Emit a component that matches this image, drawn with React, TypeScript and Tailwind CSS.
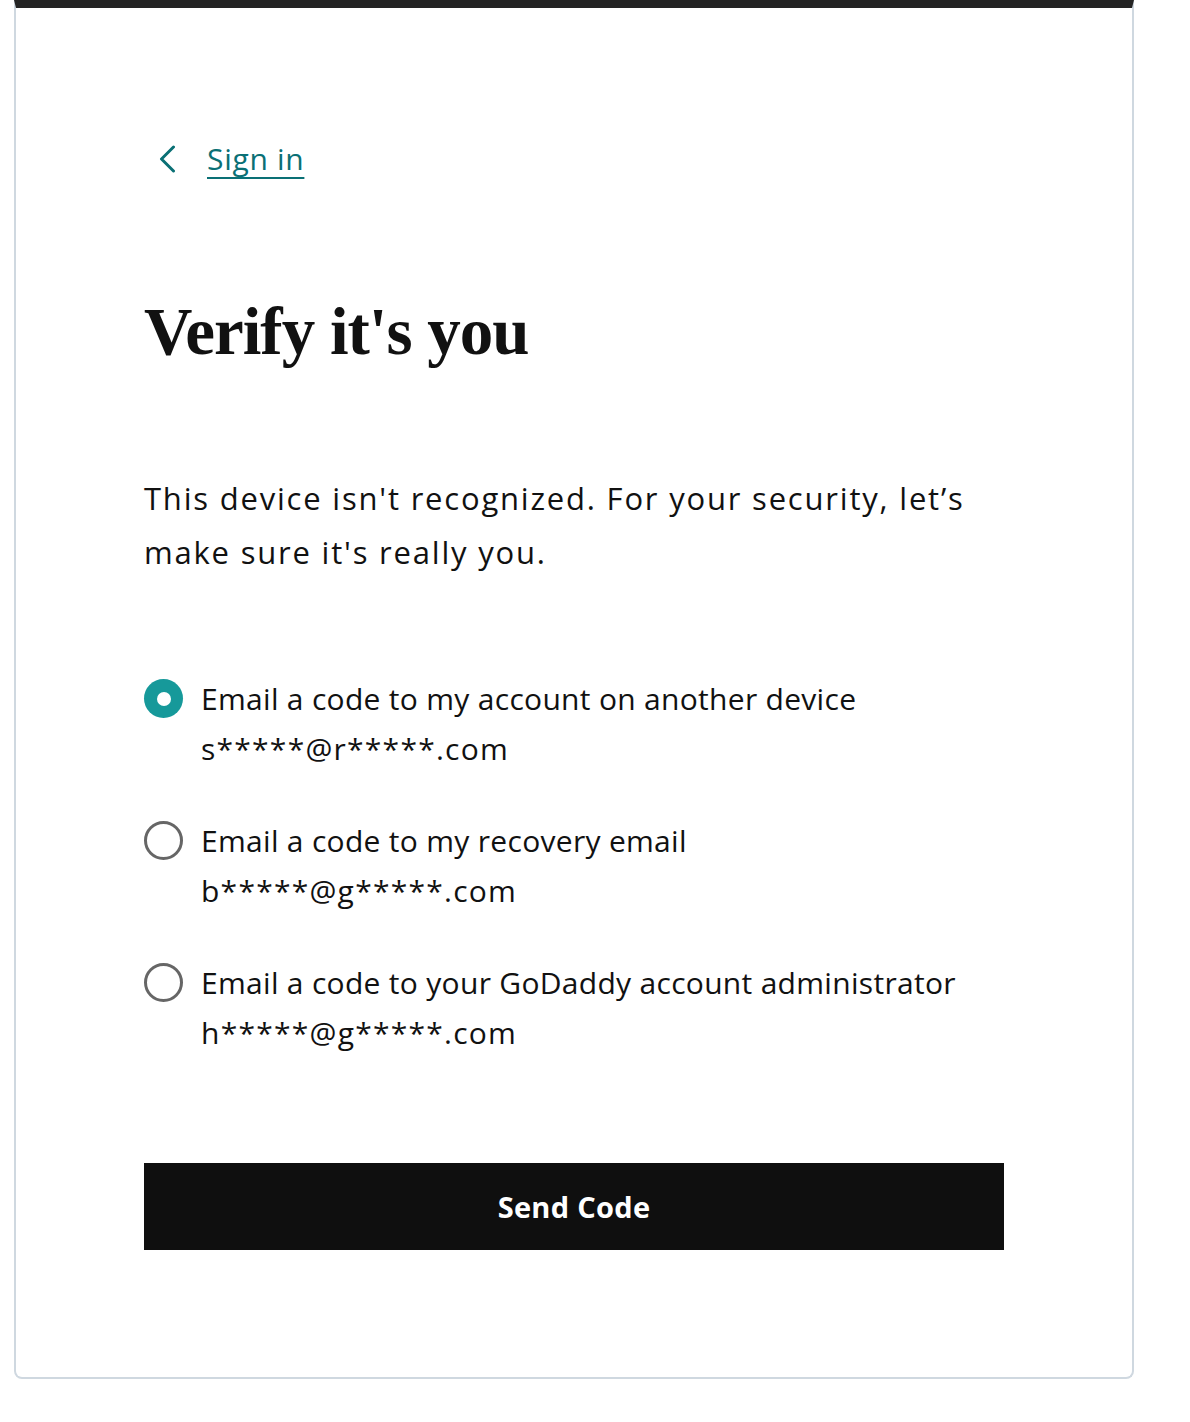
const options = [
  { label: "Email a code to my account on another device", email: "s*****@r*****.com", checked: true },
  { label: "Email a code to my recovery email", email: "b*****@g*****.com", checked: false },
  { label: "Email a code to your GoDaddy account administrator", email: "h*****@g*****.com", checked: false },
];

function Radio({ checked }: { checked: boolean }) {
  if (checked) {
    return (
      <span className="flex h-[39px] w-[39px] shrink-0 items-center justify-center rounded-full bg-[#16999a]">
        <span className="block h-[14px] w-[14px] rounded-full bg-white" />
      </span>
    );
  }
  return <span className="block h-[39px] w-[39px] shrink-0 rounded-full border-[3px] border-[#666666] bg-white" />;
}

export default function App() {
  const sans = "font-['Open_Sans','Noto_Sans',sans-serif]";
  return (
    <div className="min-h-[1422px] bg-white">
      <div className="ml-[14px] w-[1120px] rounded-b-[8px] border-x-2 border-b-2 border-[#cfd8e0] border-t-[8px] border-t-[#242424] pl-[128px] pr-[100px] pt-[131px] pb-[127px]">
        <a href="#" className={`flex items-center gap-[31px] text-[#0a7075] ${sans}`}>
          <svg width="17" height="28" viewBox="0 0 17 28" className="ml-[15px]" fill="none">
            <path d="M14.5 2 L2.5 14 L14.5 26" stroke="currentColor" strokeWidth="3" strokeLinecap="round" strokeLinejoin="round" />
          </svg>
          <span className="text-[30px] leading-[40px] tracking-[0.7px] underline underline-offset-[7px] decoration-2">Sign in</span>
        </a>

        <h1 className="mt-[112px] font-['Liberation_Serif',serif] text-[67px] font-bold leading-[80px] tracking-[-1px] text-[#111111]">
          Verify it's you
        </h1>

        <p className={`mt-[100px] w-[860px] text-[31px] leading-[54px] tracking-[1.8px] text-[#111111] ${sans}`}>
          This device isn't recognized. For your security, let’s make sure it's really you.
        </p>

        <div className={`mt-[100px] flex flex-col gap-[52px] ${sans}`}>
          {options.map((o) => (
            <label key={o.email} className="flex items-start gap-[18px]">
              <Radio checked={o.checked} />
              <span className="flex flex-col text-[#111111]">
                <span className="text-[30px] leading-[40px] tracking-[0.3px]">{o.label}</span>
                <span className="mt-[10px] text-[30px] leading-[40px] tracking-[1.25px]">{o.email}</span>
              </span>
            </label>
          ))}
        </div>

        <button className={`mt-[110px] flex h-[87px] w-[860px] items-center justify-center bg-[#0f0f0f] text-[29px] font-bold tracking-[0.3px] text-white ${sans}`}>
          Send Code
        </button>
      </div>
    </div>
  );
}
